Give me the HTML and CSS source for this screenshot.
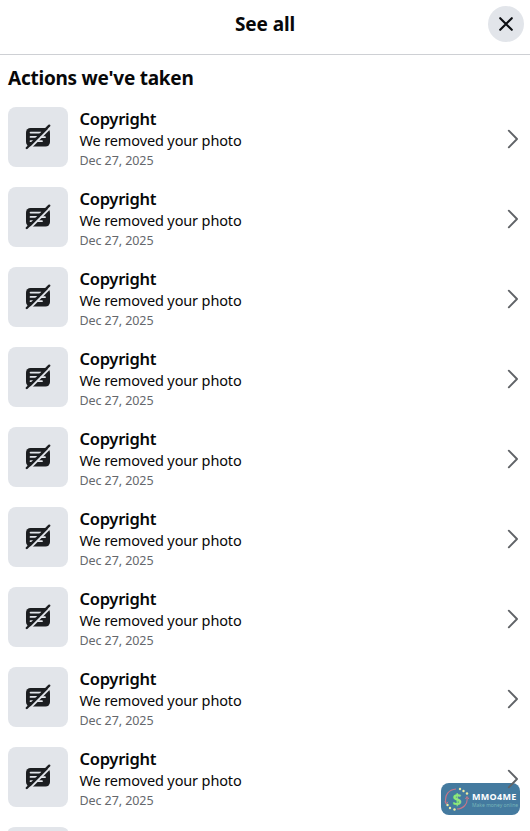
FILE: index.html
```html
<!DOCTYPE html>
<html lang="en">
<head>
<meta charset="utf-8">
<title>See all</title>
<link rel="stylesheet" href="styles.css">
</head>
<body>
<svg class="sprite" aria-hidden="true">
  <symbol id="removed" viewBox="0 0 26 26">
    <rect x="1" y="4" width="24" height="18.500" rx="4.500" fill="#1c1e21"/>
    <path d="M5.500 8.600H16M5.500 12.900H12M5.500 17.200H8M16 13.200H20M13 17.200H17" stroke="#e2e5ea" stroke-width="1.700" stroke-linecap="round"/>
    <path d="M3.500 25.700 26 3.200" stroke="#e2e5ea" stroke-width="2"/>
    <path d="M1.800 24 24.200 1.600" stroke="#1c1e21" stroke-width="2.300" stroke-linecap="round"/>
  </symbol>
  <symbol id="chevron" viewBox="0 0 12 20">
    <path d="M1.800 1.700 10 10 1.800 18.300" fill="none" stroke="#606367" stroke-width="1.900" stroke-linecap="round" stroke-linejoin="round"/>
  </symbol>
</svg>
<header class="header">
  <h1 class="title">See all</h1>
  <button class="close" aria-label="Close"><svg width="16" height="16" viewBox="0 0 16 16"><path d="M2.200 2.200 13.800 13.800M13.800 2.200 2.200 13.800" stroke="#0c0e12" stroke-width="2.100" stroke-linecap="round"/></svg></button>
</header>
<main>
  <h2 class="heading">Actions we've taken</h2>
  <ul class="list">
    <li class="row"><div class="thumb"><svg class="icon"><use href="#removed"/></svg></div><div class="info"><h3 class="name">Copyright</h3><p class="desc">We removed your photo</p><p class="date">Dec 27, 2025</p></div><svg class="chevron"><use href="#chevron"/></svg></li>
    <li class="row"><div class="thumb"><svg class="icon"><use href="#removed"/></svg></div><div class="info"><h3 class="name">Copyright</h3><p class="desc">We removed your photo</p><p class="date">Dec 27, 2025</p></div><svg class="chevron"><use href="#chevron"/></svg></li>
    <li class="row"><div class="thumb"><svg class="icon"><use href="#removed"/></svg></div><div class="info"><h3 class="name">Copyright</h3><p class="desc">We removed your photo</p><p class="date">Dec 27, 2025</p></div><svg class="chevron"><use href="#chevron"/></svg></li>
    <li class="row"><div class="thumb"><svg class="icon"><use href="#removed"/></svg></div><div class="info"><h3 class="name">Copyright</h3><p class="desc">We removed your photo</p><p class="date">Dec 27, 2025</p></div><svg class="chevron"><use href="#chevron"/></svg></li>
    <li class="row"><div class="thumb"><svg class="icon"><use href="#removed"/></svg></div><div class="info"><h3 class="name">Copyright</h3><p class="desc">We removed your photo</p><p class="date">Dec 27, 2025</p></div><svg class="chevron"><use href="#chevron"/></svg></li>
    <li class="row"><div class="thumb"><svg class="icon"><use href="#removed"/></svg></div><div class="info"><h3 class="name">Copyright</h3><p class="desc">We removed your photo</p><p class="date">Dec 27, 2025</p></div><svg class="chevron"><use href="#chevron"/></svg></li>
    <li class="row"><div class="thumb"><svg class="icon"><use href="#removed"/></svg></div><div class="info"><h3 class="name">Copyright</h3><p class="desc">We removed your photo</p><p class="date">Dec 27, 2025</p></div><svg class="chevron"><use href="#chevron"/></svg></li>
    <li class="row"><div class="thumb"><svg class="icon"><use href="#removed"/></svg></div><div class="info"><h3 class="name">Copyright</h3><p class="desc">We removed your photo</p><p class="date">Dec 27, 2025</p></div><svg class="chevron"><use href="#chevron"/></svg></li>
    <li class="row"><div class="thumb"><svg class="icon"><use href="#removed"/></svg></div><div class="info"><h3 class="name">Copyright</h3><p class="desc">We removed your photo</p><p class="date">Dec 27, 2025</p></div><svg class="chevron"><use href="#chevron"/></svg></li>
    <li class="row row-cut"><div class="thumb thumb-cut"></div></li>
  </ul>
</main>
<aside class="badge">
  <svg class="coin" width="26" height="26" viewBox="0 0 26 26">
    <path d="M2 17C0 9 5 3.500 12 3M13 23C19 23 24 18 23 12" fill="none" stroke="#c87589" stroke-width="1.100"/>
    <path d="M.8 15.500 2.300 18 4 15.800M21.500 13 23 10.500 24.800 13" fill="none" stroke="#c87589" stroke-width="1"/>
    <g fill="#eeeaa0"><circle cx="16" cy="3" r="1.200"/><circle cx="19.500" cy="5" r="1.200"/><circle cx="23" cy="7.500" r="1.200"/><circle cx="3.500" cy="19" r="1.200"/><circle cx="6" cy="22" r="1.200"/><circle cx="10.500" cy="23.500" r="1.200"/></g>
  </svg>
  <span class="dollar">$</span>
  <div class="brand"><span class="brand-name">MMO4ME</span><span class="tagline">Make money online</span></div>
</aside>
</body>
</html>
```
FILE: styles.css
```css
* { box-sizing: border-box; }
body {
  margin: 0;
  height: 831px;
  overflow: hidden;
  background: #fff;
  color: #080809;
  font-family: "Noto Sans", "Open Sans", sans-serif;
}
h1, h2, h3, p, ul { margin: 0; padding: 0; }
.sprite { position: absolute; width: 0; height: 0; }
.header {
  display: grid;
  grid-template-columns: 42px 1fr 42px;
  height: 55px;
  padding-top: 6px;
  border-bottom: 1px solid #ced0d4;
}
.title {
  grid-column: 2;
  text-align: center;
  font-size: 19px;
  line-height: 36px;
  font-weight: 700;
  letter-spacing: -0.100px;
}
.close {
  width: 36px;
  height: 36px;
  padding: 0;
  border: 0;
  border-radius: 50%;
  background: #e2e5ea;
  display: grid;
  place-items: center;
}
.heading {
  height: 52px;
  padding: 9px 8px 0;
  font-size: 19px;
  line-height: 28px;
  font-weight: 700;
  letter-spacing: -0.250px;
}
.list { list-style: none; }
.row {
  display: flex;
  height: 80px;
  padding: 0 11px 0 8px;
}
.thumb {
  display: grid;
  place-items: center;
  width: 60px;
  height: 60px;
  border-radius: 8px;
  background: #e2e5ea;
}
.row-cut { height: 4px; }
.thumb-cut { height: 4px; border-radius: 8px 8px 0 0 / 4px 4px 0 0; }
.icon { width: 26px; height: 26px; }
.info { flex: 1; padding: 1px 0 0 11.500px; white-space: nowrap; }
.name { font-size: 16.500px; line-height: 21px; font-weight: 600; letter-spacing: -0.280px; }
.desc { margin-top: 1px; font-size: 14.500px; line-height: 21px; letter-spacing: -0.130px; }
.date { font-size: 12.500px; line-height: 19px; color: #65686c; letter-spacing: -0.080px; }
.chevron { width: 12px; height: 20px; margin-top: 22px; }
.badge {
  position: absolute;
  z-index: -1;
  left: 441px;
  top: 783px;
  width: 79px;
  height: 32px;
  padding-left: 3px;
  display: flex;
  align-items: center;
  border-radius: 8px;
  background: #447a9f;
}
.coin { flex: none; }
.dollar {
  flex: none;
  width: 26px;
  margin-left: -26px;
  text-align: center;
  font-size: 16px;
  line-height: 20px;
  font-weight: 700;
  color: #91e879;
}
.brand { display: flex; flex-direction: column; padding: 1px 0 0 2px; white-space: nowrap; }
.brand-name { color: #fff; font-size: 9px; line-height: 11px; font-weight: 700; letter-spacing: 0.300px; }
.tagline { color: #77b5b8; font-size: 5px; line-height: 6px; }
```
